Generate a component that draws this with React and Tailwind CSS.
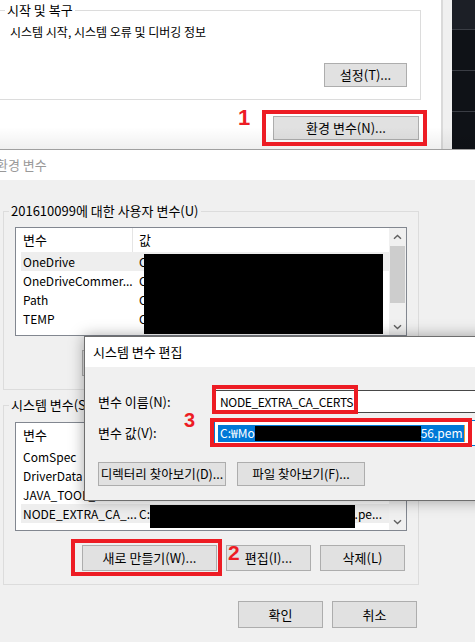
import React from 'react'

const Btn = ({ className = '', children }) => (
  <div className={`flex shrink-0 items-center justify-center whitespace-nowrap border border-[#adadad] bg-[#e1e1e1] text-black ${className}`}>
    {children}
  </div>
)

const GroupBox = ({ label, labelClass, className, children }) => (
  <div className={`relative border border-[#dcdcdc] ${className}`}>
    <span className={`absolute top-[-9px] px-[2px] leading-[16px] ${labelClass}`}>{label}</span>
    {children}
  </div>
)

const Chevron = ({ down }) => (
  <svg width="9" height="6" viewBox="0 0 9 6">
    <path
      d={down ? 'M1 1.2l3.5 3.3L8 1.2' : 'M1 4.8l3.5-3.3L8 4.8'}
      fill="none"
      stroke="#606060"
      strokeWidth="1.4"
    />
  </svg>
)

// list view with header, rows and a vertical scrollbar
const ListView = ({ rows, selected, thumb, children }) => (
  <div className="relative ml-[11px] flex h-[109px] w-[392px] border border-[#828790] bg-white">
    <div className="w-[373px] overflow-hidden">
      <div className="flex h-[24px] items-center">
        <div className="flex h-full w-[117px] items-center border-r border-[#e5e5e5] pl-[7px]">변수</div>
        <div className="pl-[6px]">값</div>
      </div>
      {rows.map((r, i) => (
        <div
          key={r.name}
          className={`ml-[5px] flex h-[19px] items-center text-[12px] ${i === selected ? 'bg-[#eeeeee]' : ''}`}
        >
          <div className="w-[111px] shrink-0 whitespace-nowrap pl-[2px]">{r.name}</div>
          <div className="flex flex-1 justify-between whitespace-nowrap pl-[7px] pr-[7px]">
            <span>{r.value}</span>
            <span>{r.tail}</span>
          </div>
        </div>
      ))}
    </div>
    <div className="flex w-[17px] flex-col bg-[#f0f0f0]">
      <div className="flex h-[17px] items-center justify-center">
        <Chevron />
      </div>
      <div className="flex-1 px-[1px]">
        {thumb && <div className="mt-[1px] h-[57px] bg-[#cdcdcd]" />}
      </div>
      <div className="flex h-[17px] items-center justify-center">
        <Chevron down />
      </div>
    </div>
    {children}
  </div>
)

const userRows = [
  { name: 'OneDrive', value: 'C' },
  { name: 'OneDriveCommer...', value: 'C' },
  { name: 'Path', value: 'C' },
  { name: 'TEMP', value: 'C' },
]

const systemRows = [
  { name: 'ComSpec', value: 'C:' },
  { name: 'DriverData', value: 'C:' },
  { name: 'JAVA_TOOL_...', value: 'C:' },
  { name: 'NODE_EXTRA_CA_...', value: 'C:', tail: '.pe...' },
]

export default function App() {
  return (
    <div className="relative h-[642px] w-[475px] overflow-hidden bg-white font-['Noto_Sans_CJK_KR',sans-serif] text-[13px] leading-[16px] text-black">
      {/* System properties window (behind) */}
      <div className="relative flex h-[149px]">
        <div className="w-[441px] bg-white pt-[10px]">
          <GroupBox label="시작 및 복구" labelClass="left-[14px] bg-white" className="ml-[-10px] h-[90px] w-[431px]">
            <div className="pl-[19px] pt-[13px] text-[12px]">시스템 시작, 시스템 오류 및 디버깅 정보</div>
            <div className="mt-[23px] flex justify-end pr-[13px]">
              <Btn className="h-[24px] w-[83px]">설정(T)...</Btn>
            </div>
          </GroupBox>
          <Btn className="ml-[273px] mt-[16px] h-[24px] w-[146px]">환경 변수(N)...</Btn>
        </div>
        <div className="w-[11px] border-l-2 border-[#dadada] bg-[#f0f0f0]" />
        <div className="flex flex-1 flex-col bg-[#0f1217]">
          <div className="h-[29px] bg-[#1c1f26]" />
          <div className="h-[41px] border-t border-[#3a3d44]" />
          <div className="h-[41px] border-t border-[#3a3d44]" />
          <div className="flex-1 border-t border-[#3a3d44]" />
        </div>
        <div className="pointer-events-none absolute inset-x-0 bottom-0 h-[22px] bg-linear-to-b from-transparent to-black/[0.06]" />
      </div>

      {/* Environment variables window */}
      <div className="h-[493px] border-t border-[#a0a0a0] bg-[#f0f0f0]">
        <div className="h-[30px] bg-white leading-[30px] text-[#999999]">
          <div className="ml-[-4px]">환경 변수</div>
        </div>

        <GroupBox
          label="201610099에 대한 사용자 변수(U)"
          labelClass="left-[5px] bg-[#f0f0f0]"
          className="ml-[3px] mt-[31px] h-[179px] w-[416px]"
        >
          <div className="pt-[15px]">
            <ListView rows={userRows} selected={0} thumb>
              <div className="absolute left-[128px] top-[26px] h-[80px] w-[239px] bg-black" />
            </ListView>
          </div>
          <div className="ml-[78px] mt-[14px] flex gap-[9px]">
            <Btn className="h-[26px] w-[135px]">새로 만들기(N)...</Btn>
            <Btn className="h-[26px] w-[85px]">편집(E)...</Btn>
            <Btn className="h-[26px] w-[85px]">삭제(D)</Btn>
          </div>
        </GroupBox>

        <GroupBox
          label="시스템 변수(S)"
          labelClass="left-[5px] bg-[#f0f0f0]"
          className="ml-[3px] mt-[15px] h-[180px] w-[416px]"
        >
          <div className="pt-[16px]">
            <ListView rows={systemRows} selected={3}>
              <div className="absolute left-[134px] top-[82px] h-[23px] w-[205px] bg-black" />
            </ListView>
          </div>
          <div className="ml-[78px] mt-[14px] flex gap-[9px]">
            <Btn className="h-[26px] w-[135px]">새로 만들기(W)...</Btn>
            <Btn className="h-[26px] w-[85px]">편집(I)...</Btn>
            <Btn className="h-[26px] w-[85px]">삭제(L)</Btn>
          </div>
        </GroupBox>

        <div className="ml-[238px] mt-[16px] flex gap-[9px]">
          <Btn className="h-[27px] w-[85px]">확인</Btn>
          <Btn className="h-[27px] w-[85px]">취소</Btn>
        </div>
      </div>

      {/* Edit system variable dialog */}
      <div className="absolute left-[84px] top-[336px] h-[165px] w-[420px] border border-[#6e6e6e] bg-[#f0f0f0] shadow-[0_0_14px_rgba(0,0,0,0.35)]">
        <div className="h-[30px] bg-white pl-[8px] leading-[30px]">시스템 변수 편집</div>
        <div className="pl-[13px] pt-[23px]">
          <div className="flex h-[23px] items-center">
            <div className="w-[116px]">변수 이름(N):</div>
            <div className="flex h-full flex-1 items-center border border-[#474747] bg-white pl-[5px] text-[12px] tracking-[-0.35px]">
              NODE_EXTRA_CA_CERTS
            </div>
          </div>
          <div className="mt-[7px] flex h-[26px] items-center">
            <div className="w-[116px]">변수 값(V):</div>
            <div className="flex h-full flex-1 items-center border border-[#0078d7] bg-white pl-[3px] text-[12px]">
              <div className="flex h-[17px] items-center bg-[#0078d7] pl-[2px] pr-[1px] text-white">
                <span>C:₩Mo</span>
                <div className="h-[15px] w-[166px] bg-black" />
                <span>56.pem</span>
              </div>
              <div className="h-[17px] w-[1px] bg-[#f0a030]" />
            </div>
          </div>
          <div className="mt-[16px] flex gap-[11px] text-[12.5px]">
            <Btn className="h-[24px] w-[128px]">디렉터리 찾아보기(D)...</Btn>
            <Btn className="h-[24px] w-[128px]">파일 찾아보기(F)...</Btn>
          </div>
        </div>
      </div>

      {/* Red annotations */}
      <div className="absolute left-[262px] top-[110px] h-[36px] w-[165px] border-4 border-[#ed1c24]" />
      <div className="absolute left-[238px] top-[104px] font-['Liberation_Sans',sans-serif] text-[22px] font-bold leading-[28px] text-[#ed1c24]">1</div>
      <div className="absolute left-[71px] top-[539px] h-[37px] w-[151px] border-4 border-[#ed1c24]" />
      <div className="absolute left-[228px] top-[539px] font-['Liberation_Sans',sans-serif] text-[21px] font-bold leading-[28px] text-[#ed1c24]">2</div>
      <div className="absolute left-[212px] top-[385px] h-[29px] w-[146px] border-4 border-[#ed1c24]" />
      <div className="absolute left-[210px] top-[418px] h-[29px] w-[262px] border-4 border-[#ed1c24]" />
      <div className="absolute left-[184px] top-[406px] font-['Liberation_Sans',sans-serif] text-[20px] font-bold leading-[28px] text-[#ed1c24]">3</div>
    </div>
  )
}
